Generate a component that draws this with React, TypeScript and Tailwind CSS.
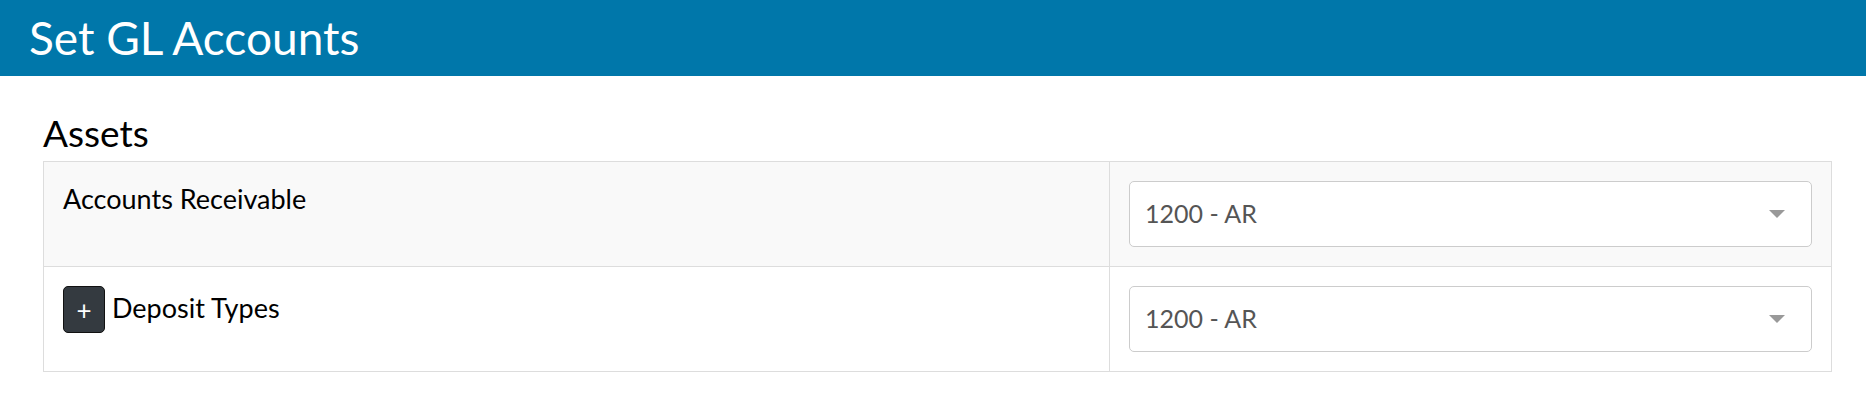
const rows = [
  { id: 'ar', label: 'Accounts Receivable', value: '1200 - AR', expandable: false },
  { id: 'deposit', label: 'Deposit Types', value: '1200 - AR', expandable: true },
]

function AccountSelect({ value }: { value: string }) {
  return (
    <div className="flex h-[66px] items-center rounded-[5px] border border-[#cccccc] bg-white pl-[15px] pr-[26px]">
      <span className="text-[25px] text-[#555555]">{value}</span>
      <span className="ml-auto h-0 w-0 border-x-[8px] border-t-[8px] border-x-transparent border-t-[#999999]" />
    </div>
  )
}

export default function App() {
  return (
    <div className="min-h-screen bg-white font-['Lato','Liberation_Sans',sans-serif]">
      <div className="flex h-[76px] items-center bg-[#0077aa] px-[29px]">
        <h1 className="text-[46px] leading-none text-white">Set GL Accounts</h1>
      </div>

      <div className="px-[43px] pt-[36px]">
        <h2 className="mb-[7px] text-[37px] leading-[42px] text-black">Assets</h2>

        <table className="w-[1789px] border-collapse border border-[#dddddd]">
          <tbody>
            {rows.map((row, i) => (
              <tr key={row.id} className={i % 2 === 0 ? 'bg-[#f9f9f9]' : 'bg-white'}>
                <td className="w-[1066px] border border-[#dddddd] px-[19px] pt-[17px] align-top">
                  <div className="flex items-center gap-[7px]">
                    {row.expandable && (
                      <button className="mt-[2px] flex h-[47px] w-[42px] items-center justify-center rounded-[5px] border border-[#111111] bg-[#343a40] text-[26px] leading-none text-white">
                        +
                      </button>
                    )}
                    <span className="text-[27px] text-black">{row.label}</span>
                  </div>
                </td>
                <td className="border border-[#dddddd] px-[19px] py-[19px]">
                  <AccountSelect value={row.value} />
                </td>
              </tr>
            ))}
          </tbody>
        </table>
      </div>
    </div>
  )
}
